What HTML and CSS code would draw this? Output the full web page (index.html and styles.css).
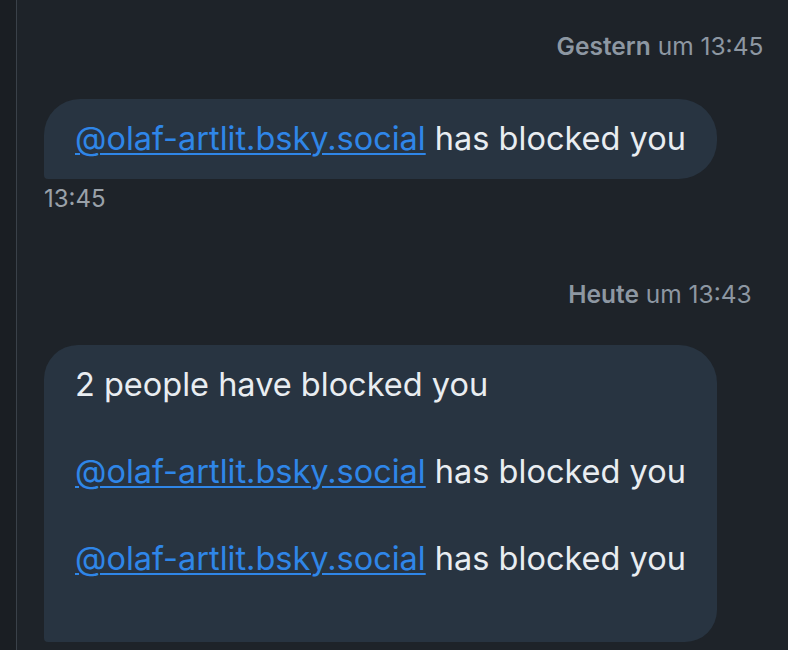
FILE: index.html
```html
<!DOCTYPE html>
<html lang="de">
<head>
<meta charset="utf-8">
<link rel="stylesheet" href="styles.css">
</head>
<body>
<div class="app">
  <div class="rail"></div>
  <main class="chat">
    <div class="day"><span class="day-label"><b>Gestern</b> um 13:45</span></div>
    <div class="msg">
      <div class="bubble"><p><a href="#">@olaf-artlit.bsky.social</a> has blocked you</p></div>
      <div class="time">13:45</div>
    </div>
    <div class="day day-2"><span class="day-label"><b>Heute</b> um 13:43</span></div>
    <div class="msg">
      <div class="bubble bubble-tall">
        <p>2 people have blocked you</p>
        <p><a href="#">@olaf-artlit.bsky.social</a> has blocked you</p>
        <p><a href="#">@olaf-artlit.bsky.social</a> has blocked you</p>
      </div>
    </div>
  </main>
</div>
</body>
</html>
```
FILE: styles.css
```css
html, body {
  margin: 0;
  padding: 0;
  background: #1e2329;
  height: 100%;
  overflow: hidden;
}
body {
  font-family: Inter, "Noto Sans", sans-serif;
  color: #e9edf1;
}
.app {
  display: flex;
  height: 650px;
}
.rail {
  width: 16px;
  background: #1a1e23;
  border-right: 1px solid #3a4149;
  flex: none;
}
.chat {
  flex: 1;
  padding-left: 27px;
  display: flex;
  flex-direction: column;
}
.day {
  display: flex;
  justify-content: flex-end;
}
.day-label {
  width: 256px;
  text-align: center;
  font-size: 24.5px;
  color: #8d97a2;
  line-height: 30px;
  padding-top: 31px;
  white-space: nowrap;
}
.day-label b {
  font-weight: 600;
}
.day-2 .day-label {
  padding-top: 20px;
}
.msg {
  display: flex;
  flex-direction: column;
  align-items: flex-start;
  margin-top: 38px;
}
.day-2 + .msg {
  margin-top: 36px;
}
.bubble {
  background: #283441;
  border-radius: 36px 38px 38px 4px;
  padding: 18px 31px;
  font-size: 32.5px;
  line-height: 43.5px;
  white-space: nowrap;
}
.bubble p {
  margin: 0;
}
.bubble-tall p + p {
  margin-top: 43.5px;
}
.bubble-tall {
  padding-bottom: 62px;
  border-radius: 34px 38px 32px 4px;
}
.bubble a {
  color: #2f86e8;
  text-decoration: underline;
  text-decoration-thickness: 2px;
  text-underline-offset: 3px;
}
.time {
  font-size: 24px;
  color: #9aa1a9;
  line-height: 40px;
  height: 80px;
}
```
